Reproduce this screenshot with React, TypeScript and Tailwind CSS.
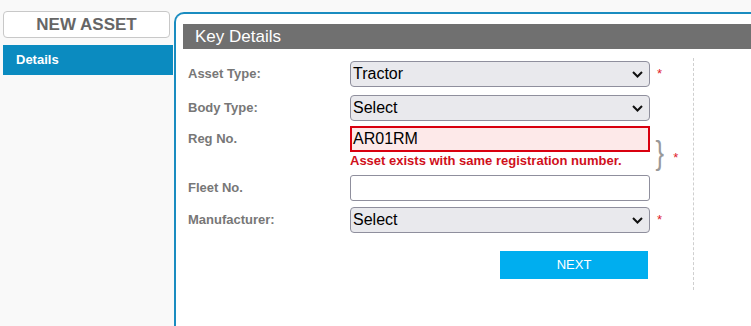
import React from "react";

function Chevron() {
  return (
    <svg width="11" height="7" viewBox="0 0 11 7" className="shrink-0">
      <path d="M1 1 L5.5 5.5 L10 1" fill="none" stroke="#111" strokeWidth="2" strokeLinejoin="miter" />
    </svg>
  );
}

function SelectBox({ value }: { value: string }) {
  return (
    <div className="h-[26px] w-[300px] border border-[#8f8f9d] rounded-[4px] bg-[#e9e9ed] flex items-center justify-between pl-[2px] pr-[6px] text-[16px] text-black leading-none">
      <span>{value}</span>
      <Chevron />
    </div>
  );
}

function Star() {
  return <span className="text-[#e0202a] text-[13px] leading-none">*</span>;
}

function Label({ children }: { children: React.ReactNode }) {
  return (
    <div className="w-[162px] h-[26px] flex items-center text-[13px] font-bold text-[#777]">
      {children}
    </div>
  );
}

export default function App() {
  return (
    <div className="w-[751px] h-[326px] bg-[#f9f9f9] flex overflow-hidden font-['Liberation_Sans',Arial,sans-serif]">
      <div className="w-[170px] ml-[3px] pt-[11px] flex flex-col shrink-0">
        <div className="h-[27px] w-[167px] border border-[#c8c8c8] rounded-[4px] bg-white flex items-center justify-center text-[17px] font-bold text-[#666]">
          NEW ASSET
        </div>
        <div className="mt-[7px] h-[30px] bg-[#0b8bc0] flex items-center pl-[13px] text-[13px] font-bold text-white">
          Details
        </div>
      </div>
      <div className="ml-[1px] mt-[12px] flex-1 border-l-2 border-t-2 border-[#1a8cc0] rounded-tl-[10px] bg-white pl-[7px] pt-[10px]">
        <div className="h-[25px] bg-[#707070] pl-[12px] text-white text-[17px] flex items-center">
          Key Details
        </div>
        <div className="mt-[9px] w-[511px] h-[232px] border-r border-dashed border-[#cfcfcf] pl-[5px] pt-[3px]">
          <div className="flex items-center">
            <Label>Asset Type:</Label>
            <SelectBox value="Tractor" />
            <div className="pl-[7px] -mt-[3px]">
              <Star />
            </div>
          </div>
          <div className="flex items-center mt-[8px]">
            <Label>Body Type:</Label>
            <SelectBox value="Select" />
          </div>
          <div className="flex items-start mt-[5px]">
            <Label>Reg No.</Label>
            <div className="flex flex-col w-[300px]">
              <div className="h-[26px] w-[300px] border-2 border-[#d9000f] bg-[#fde9e9] flex items-center pl-[1px] text-[16px] text-black">
                AR01RM
              </div>
              <div className="mt-[2px] text-[13px] leading-[14px] font-bold text-[#d0101b]">
                Asset exists with same registration number.
              </div>
            </div>
            <div className="flex items-center mt-[10px] h-[32px] pl-[4px]">
              <span className="h-[32px] text-[34px] leading-[32px] text-[#999] scale-x-75 inline-block">
                {"}"}
              </span>
              <span className="ml-[8px] mt-[10px]">
                <Star />
              </span>
            </div>
          </div>
          <div className="flex items-center mt-[7px]">
            <Label>Fleet No.</Label>
            <div className="h-[26px] w-[300px] border border-[#8f8f9d] rounded-[3px] bg-white" />
          </div>
          <div className="flex items-center mt-[6px]">
            <Label>Manufacturer:</Label>
            <SelectBox value="Select" />
            <div className="pl-[7px] -mt-[3px]">
              <Star />
            </div>
          </div>
          <div className="flex mt-[18px]">
            <div className="w-[162px]" />
            <div className="w-[300px] flex justify-end pr-[2px]">
              <div className="w-[148px] h-[28px] bg-[#00aeef] text-white text-[13px] flex items-center justify-center">
                NEXT
              </div>
            </div>
          </div>
        </div>
      </div>
    </div>
  );
}
